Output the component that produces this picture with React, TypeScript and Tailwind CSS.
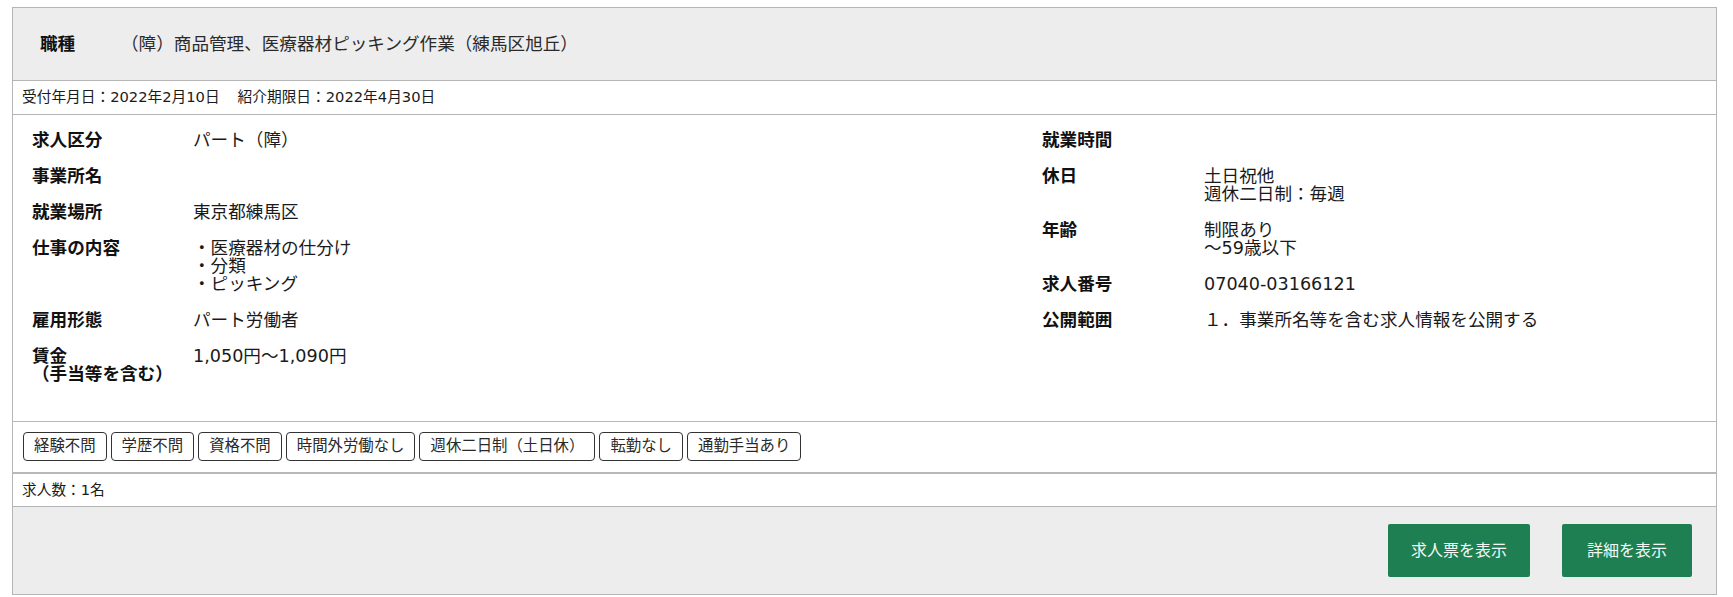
import React from 'react';

type Row = { label: React.ReactNode; lines: string[] };

const leftRows: Row[] = [
  { label: '求人区分', lines: ['パート（障）'] },
  { label: '事業所名', lines: [] },
  { label: '就業場所', lines: ['東京都練馬区'] },
  { label: '仕事の内容', lines: ['・医療器材の仕分け', '・分類', '・ピッキング'] },
  { label: '雇用形態', lines: ['パート労働者'] },
  {
    label: (
      <>
        賃金
        <br />
        （手当等を含む）
      </>
    ),
    lines: ['1,050円～1,090円'],
  },
];

const rightRows: Row[] = [
  { label: '就業時間', lines: [] },
  { label: '休日', lines: ['土日祝他', '週休二日制：毎週'] },
  { label: '年齢', lines: ['制限あり', '～59歳以下'] },
  { label: '求人番号', lines: ['07040-03166121'] },
  { label: '公開範囲', lines: ['１．事業所名等を含む求人情報を公開する'] },
];

const tags = ['経験不問', '学歴不問', '資格不問', '時間外労働なし', '週休二日制（土日休）', '転勤なし', '通勤手当あり'];

function InfoList({ rows, labelWidth }: { rows: Row[]; labelWidth: string }) {
  return (
    <dl className="flex flex-col gap-[18px]">
      {rows.map((r, i) => (
        <div key={i} className="flex">
          <dt className={`${labelWidth} shrink-0 font-bold text-[#111] min-h-[18px]`}>{r.label}</dt>
          <dd className="text-[#1a1a1a]">
            {r.lines.map((l) => (
              <div key={l}>{l}</div>
            ))}
          </dd>
        </div>
      ))}
    </dl>
  );
}

export default function App() {
  return (
    <div
      className="min-h-screen bg-white pt-[7px] pl-[12px]"
      style={{ fontFamily: '"DejaVu Sans", "Noto Sans CJK JP", sans-serif' }}
    >
      <div className="w-[1705px] border border-[#b5b5b5]">
        <div className="h-[72px] bg-[#ededed] flex items-center pl-[27px] text-[17.6px] leading-[18px]">
          <span className="font-bold text-[#111] w-[81px]">職種</span>
          <span className="text-[#2a2a2a]">（障）商品管理、医療器材ピッキング作業（練馬区旭丘）</span>
        </div>

        <div className="h-[34px] border-t border-[#b5b5b5] flex items-center pl-[9px] text-[14.7px] text-[#1a1a1a]">
          <span>受付年月日：2022年2月10日</span>
          <span className="ml-[18px]">紹介期限日：2022年4月30日</span>
        </div>

        <div className="border-t border-[#b5b5b5] flex pt-[16px] pb-[38px] pl-[19px] text-[17.6px] leading-[18px]">
          <div className="w-[1010px]">
            <InfoList rows={leftRows} labelWidth="w-[161px]" />
          </div>
          <div className="flex-1">
            <InfoList rows={rightRows} labelWidth="w-[162px]" />
          </div>
        </div>

        <div className="border-t border-b-2 border-[#b8b8b8] pt-[10px] pb-[11px] pl-[10px] flex gap-[4px]">
          {tags.map((t) => (
            <span
              key={t}
              className="h-[29px] px-[10px] flex items-center border border-[#333] rounded-[4px] text-[15.4px] text-[#2a2a2a] leading-none"
            >
              {t}
            </span>
          ))}
        </div>

        <div className="h-[33px] border-b border-[#b5b5b5] flex items-center pl-[9px] text-[14.7px] text-[#1a1a1a]">
          求人数：1名
        </div>

        <div className="bg-[#ededed] flex justify-end gap-[32px] pt-[17px] pb-[17px] pr-[24px]">
          <button className="w-[142px] h-[53px] bg-[#1e7f53] text-[#f2faf5] text-[16px] rounded-[2px]">
            求人票を表示
          </button>
          <button className="w-[130px] h-[53px] bg-[#1e7f53] text-[#f2faf5] text-[16px] rounded-[2px]">
            詳細を表示
          </button>
        </div>
      </div>
    </div>
  );
}
